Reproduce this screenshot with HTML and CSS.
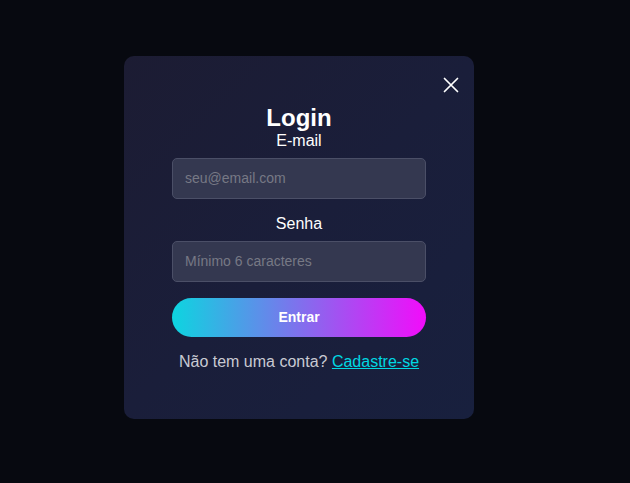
FILE: index.html
```html
<!DOCTYPE html>
<html lang="pt">
<head>
<meta charset="utf-8">
<link rel="stylesheet" href="styles.css">
</head>
<body>
<div class="overlay">
  <div class="modal">
    <button class="close" aria-label="Fechar">
      <svg width="16" height="16" viewBox="0 0 16 16"><path d="M1.5 1.5L14.5 14.5M14.5 1.5L1.5 14.5" stroke="#fff" stroke-width="1.7" stroke-linecap="round"/></svg>
    </button>
    <h2 class="title">Login</h2>
    <div class="group">
      <label class="label">E-mail</label>
      <input class="input" type="email" placeholder="seu@email.com">
    </div>
    <div class="group">
      <label class="label">Senha</label>
      <input class="input" type="password" placeholder="Mínimo 6 caracteres">
    </div>
    <button class="submit">Entrar</button>
    <p class="foot">Não tem uma conta? <a href="#" class="link">Cadastre-se</a></p>
  </div>
</div>
</body>
</html>
```
FILE: styles.css
```css
html, body {
  margin: 0;
  padding: 0;
  height: 100%;
}
body {
  background: #070910;
  font-family: "Liberation Sans", Arial, sans-serif;
  color: #fff;
}
.overlay {
  box-sizing: border-box;
  display: flex;
  justify-content: center;
  align-items: center;
  height: 100%;
  padding-right: 32px;
}
.modal {
  position: relative;
  box-sizing: border-box;
  width: 350px;
  padding: 48px;
  border-radius: 10px;
  background: linear-gradient(135deg, #1c1c33 0%, #1a1e3a 50%, #18203e 100%);
  text-align: center;
  margin-top: -9px;
}
.close {
  position: absolute;
  top: 19px;
  right: 13px;
  width: 20px;
  height: 20px;
  padding: 0;
  border: 0;
  background: none;
  display: flex;
  align-items: center;
  justify-content: center;
  cursor: pointer;
}
.title {
  margin: 0;
  font-size: 24px;
  font-weight: bold;
  line-height: normal;
}
.group {
  margin-bottom: 16px;
}
.label {
  display: block;
  font-size: 16px;
  margin-bottom: 8px;
  color: #fff;
}
.input {
  display: block;
  box-sizing: border-box;
  width: 100%;
  height: 41px;
  padding: 0 12px;
  border: 1px solid #4b4f67;
  border-radius: 5px;
  background: #343850;
  color: #fff;
  font-family: "Liberation Sans", Arial, sans-serif;
  font-size: 14px;
  outline: none;
}
.input::placeholder {
  color: #777985;
}
.submit {
  display: block;
  width: 100%;
  height: 39px;
  border: 0;
  border-radius: 20px;
  background: linear-gradient(90deg, #0dd5e0 0%, #f20cfa 100%);
  color: #fff;
  font-family: "Liberation Sans", Arial, sans-serif;
  font-size: 14px;
  font-weight: bold;
  cursor: pointer;
}
.foot {
  margin: 16px 0 0;
  font-size: 16px;
  color: #c9cad3;
}
.link {
  color: #00d8e2;
  text-decoration: underline;
}
```
